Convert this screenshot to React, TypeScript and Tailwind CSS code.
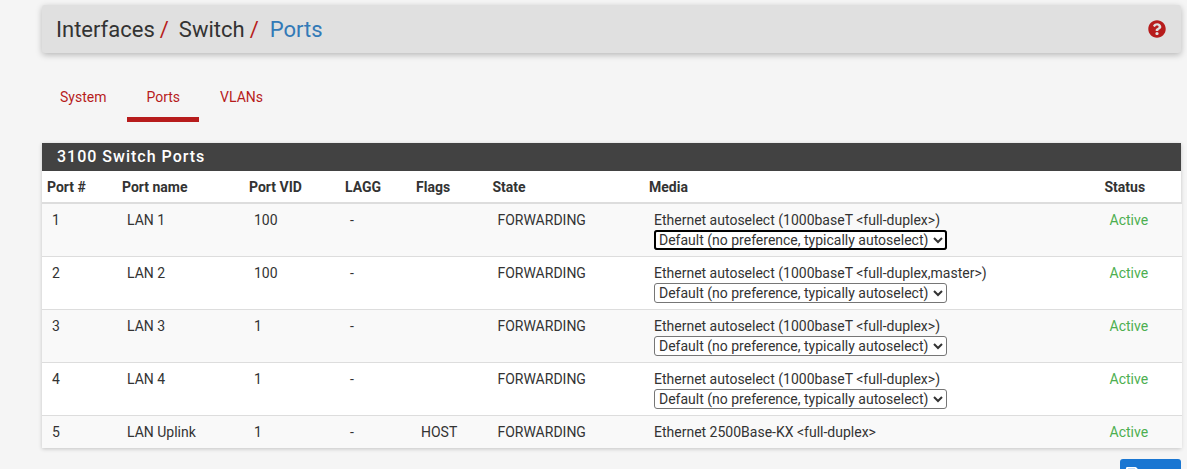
import React from "react";
import { FaQuestionCircle, FaSave } from "react-icons/fa";

const rows = [
  { n: "1", name: "LAN 1", vid: "100", flags: "", media: "Ethernet autoselect (1000baseT <full-duplex>)", sel: true, focus: true },
  { n: "2", name: "LAN 2", vid: "100", flags: "", media: "Ethernet autoselect (1000baseT <full-duplex,master>)", sel: true },
  { n: "3", name: "LAN 3", vid: "1", flags: "", media: "Ethernet autoselect (1000baseT <full-duplex>)", sel: true },
  { n: "4", name: "LAN 4", vid: "1", flags: "", media: "Ethernet autoselect (1000baseT <full-duplex>)", sel: true },
  { n: "5", name: "LAN Uplink", vid: "1", flags: "HOST", media: "Ethernet 2500Base-KX <full-duplex>", sel: false },
];

const headers = [
  ["Port #", "w-[75px]"],
  ["Port name", "w-[127px]"],
  ["Port VID", "w-[96px]"],
  ["LAGG", "w-[71px]"],
  ["Flags", "w-[76.5px]"],
  ["State", "w-[156.5px]"],
  ["Media", "w-[455.5px]"],
  ["Status", "w-[82.5px]"],
];

export default function App() {
  return (
    <div className="h-[469px] overflow-hidden bg-[#f5f5f5] pl-[42px] pr-[6px] pt-[5px] font-['Roboto',sans-serif] text-[14px] leading-[20px] text-[#333333]">
      <div className="flex h-[48px] items-center justify-between rounded-[3px] bg-[#e0e0e0] pl-[14px] pr-[15px] shadow-[0_2px_6px_rgba(0,0,0,0.25)]">
        <h1 className="flex pt-[1px] text-[22px] leading-[24px] font-normal">
          <span>Interfaces</span>
          <span className="ml-[5px] text-[#b71c1c]">/</span>
          <span className="ml-[10px]">Switch</span>
          <span className="ml-[5px] text-[#b71c1c]">/</span>
          <span className="ml-[11px] text-[#337ab7]">Ports</span>
        </h1>
        <FaQuestionCircle className="text-[18px] text-[#b71c1c]" />
      </div>

      <nav className="mt-[23px] flex h-[46px]">
        <a className="flex h-[46px] items-center px-[18px] pb-[5px] text-[#b71c1c]">System</a>
        <a className="ml-[3px] flex h-[46px] items-center border-b-[5px] border-[#b71c1c] px-[19px] text-[#b71c1c]">Ports</a>
        <a className="flex h-[46px] items-center px-[21px] pb-[5px] text-[#b71c1c]">VLANs</a>
      </nav>

      <section className="mt-[21px] bg-white shadow-[0_1px_4px_rgba(0,0,0,0.2)]">
        <h2 className="flex h-[28px] items-center bg-[#424242] pl-[15px] text-[16px] font-medium tracking-[1px] text-white">
          3100 Switch Ports
        </h2>
        <table className="w-full table-fixed border-collapse">
          <thead>
            <tr className="h-[32px] border-b-2 border-[#dddddd]">
              {headers.map(([h, w]) => (
                <th key={h} className={`${w} px-[5px] text-left font-bold text-[#333333]`}>
                  {h}
                </th>
              ))}
            </tr>
          </thead>
          <tbody>
            {rows.map((r, i) => (
              <tr
                key={r.n}
                className={`${i % 2 === 0 ? "bg-[#f9f9f9]" : "bg-white"} ${r.sel ? "h-[53px]" : "h-[33px]"} ${i < 4 ? "border-b border-[#dddddd]" : ""} align-top`}
              >
                <td className="px-[10px] pt-[6px]">{r.n}</td>
                <td className="px-[10px] pt-[6px]">{r.name}</td>
                <td className="px-[10px] pt-[6px]">{r.vid}</td>
                <td className="px-[10px] pt-[6px]">-</td>
                <td className="px-[10px] pt-[6px]">{r.flags}</td>
                <td className="px-[10px] pt-[6px]">FORWARDING</td>
                <td className="px-[10px] pt-[6px]">
                  <div>{r.media}</div>
                  {r.sel && (
                    <select
                      defaultValue="d"
                      className={`block h-[20px] w-[293px] rounded-[3px] border border-[#767676] bg-white text-[14px] leading-[18px] text-[#333333] ${r.focus ? "outline-2 outline-black -outline-offset-2" : ""}`}
                    >
                      <option value="d">Default (no preference, typically autoselect)</option>
                    </select>
                  )}
                </td>
                <td className="px-[10px] pt-[6px] text-[#4caf50]">Active</td>
              </tr>
            ))}
          </tbody>
        </table>
      </section>

      <div className="mt-[11px] flex justify-end">
        <button className="flex h-[34px] w-[61px] items-start gap-[5px] rounded-[3px] bg-[#1976d2] pl-[5px] pt-[7px] text-white">
          <FaSave className="text-[15px]" />
          <span className="leading-[24px]">Save</span>
        </button>
      </div>
    </div>
  );
}
